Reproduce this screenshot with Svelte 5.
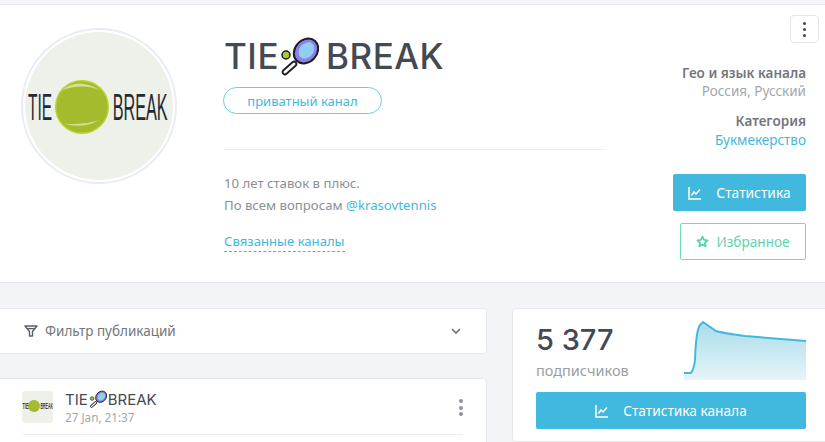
<script>
  const chart = "M684 373 L691 373 Q694 369 695 360 Q696 330 700 325 L703 322 L716 331 Q722 333 745 336 L806 341";
  const area = chart + " L806 380 L684 380 Z";
</script>

{#snippet racket(size)}
  <svg class="racket" width={size} height={size} viewBox="0 0 40 40">
    <circle cx="7" cy="19" r="4" fill="#a8c92f" stroke="#1c1c22" stroke-width="1.5" />
    <path d="M15 28 L6 36" stroke="#1c1c22" stroke-width="6.5" stroke-linecap="round" />
    <path d="M15 28 L6 36" stroke="#f4f4f4" stroke-width="3" stroke-linecap="round" />
    <ellipse cx="27" cy="15" rx="11" ry="13.5" transform="rotate(42 27 15)" fill="#8f7ee8" stroke="#1c1c22" stroke-width="2" />
    <ellipse cx="27.5" cy="14.5" rx="7" ry="9" transform="rotate(42 27.5 14.5)" fill="#8fd0f0" />
  </svg>
{/snippet}

{#snippet logo()}
  <svg viewBox="0 0 152 152" width="100%" height="100%">
    <circle cx="76" cy="76" r="76" fill="#eef1ea" />
    <text transform="translate(3 90) scale(.43 1)" class="logo-text">TIE</text>
    <circle cx="58.5" cy="77" r="27" fill="#a5bb2e" stroke="#bcd22f" stroke-width="1.5" />
    <path d="M38 60 Q54 46 78 60 Q58 52 38 60Z" fill="#d5e08a" />
    <path d="M40 94 Q58 100 76 91 Q58 96 40 94Z" fill="#d5e08a" />
    <text transform="translate(90 90) scale(.45 1)" class="logo-text">BREAK</text>
  </svg>
{/snippet}

{#snippet statsIcon()}
  <svg width="14" height="14" viewBox="0 0 14 14" fill="none" stroke="currentColor" stroke-width="1.5">
    <path d="M1 1 V13 H13" />
    <path d="M3.5 9.5 L6 6 L8 8 L12 3.5" />
  </svg>
{/snippet}

<div class="page">
  <header class="head">
    <div class="avatar">{@render logo()}</div>
    <div class="info">
      <h1>TIE{@render racket(40)}BREAK</h1>
      <span class="badge">приватный канал</span>
      <hr />
      <p class="desc">10 лет ставок в плюс.<br />По всем вопросам <span class="blue">@krasovtennis</span></p>
      <span class="linked">Связанные каналы</span>
    </div>
    <div class="side">
      <button class="menu" aria-label="меню"><i></i><i></i><i></i></button>
      <b class="geo">Гео и язык канала</b>
      <span class="muted">Россия, Русский</span>
      <b class="cat">Категория</b>
      <span class="blue">Букмекерство</span>
      <button class="stat">{@render statsIcon()}<span>Статистика</span></button>
      <button class="fav">
        <svg width="13" height="13" viewBox="0 0 24 24" fill="none" stroke="currentColor" stroke-width="3.4" stroke-linejoin="round"><path d="M12 3 L14.8 9 L21.5 9.8 L16.5 14.3 L17.9 21 L12 17.6 L6.1 21 L7.5 14.3 L2.5 9.8 L9.2 9 Z" /></svg>
        <span>Избранное</span>
      </button>
    </div>
  </header>

  <div class="body">
    <div class="left">
      <section class="card filter">
        <svg width="14" height="14" viewBox="0 0 14 14" fill="none" stroke="#5c6169" stroke-width="1.4" stroke-linejoin="round"><path d="M1 2 H13 L8.5 7.5 V12 H5.5 V7.5 Z" /><path d="M3 4.6 H11" /></svg>
        <span>Фильтр публикаций</span>
        <svg class="chev" width="10" height="7" viewBox="0 0 10 7" fill="none" stroke="#6f747c" stroke-width="1.7"><path d="M1 1 L5 5 L9 1" /></svg>
      </section>
      <section class="card post">
        <div class="post-head">
          <div class="thumb">
            <svg viewBox="0 0 32 32" width="32" height="32">
              <rect width="32" height="32" fill="#eef1ea" />
              <circle cx="12" cy="15" r="6" fill="#a3bb2d" />
              <text transform="translate(0.5 18) scale(.43 1)" class="thumb-text">TIE</text>
              <text transform="translate(18.5 18) scale(.39 1)" class="thumb-text">BREAK</text>
            </svg>
          </div>
          <div class="post-title">
            <div class="name">TIE{@render racket(18)}BREAK</div>
            <div class="date">27 Jan, 21:37</div>
          </div>
          <div class="dots"><i></i><i></i><i></i></div>
        </div>
      </section>
    </div>

    <section class="card right">
      <div class="count">5 377</div>
      <div class="subs">подписчиков</div>
      <svg class="chart" width="825" height="442" viewBox="0 0 825 442">
        <defs>
          <linearGradient id="fade" x1="0" y1="0" x2="0" y2="1">
            <stop offset="0" stop-color="#a9dcea" />
            <stop offset="1" stop-color="#e6f5f9" />
          </linearGradient>
        </defs>
        <path d={area} fill="url(#fade)" />
        <path d={chart} fill="none" stroke="#41b8dd" stroke-width="2" />
      </svg>
      <button class="stat wide">{@render statsIcon()}<span>Статистика канала</span></button>
    </section>
  </div>
</div>

<style>
  :global(body) {
    margin: 0;
    background: #f3f4f8;
    overflow: hidden;
  }
  .page {
    width: 825px;
    height: 442px;
    overflow: hidden;
    font-family: "Noto Sans", "Open Sans", sans-serif;
    color: #8b9096;
    font-size: 13px;
  }
  .head {
    margin-top: 4px;
    height: 279px;
    box-sizing: border-box;
    background: #fff;
    border-top: 1px solid #e6e8ee;
    border-bottom: 1px solid #e6e8ee;
    display: flex;
    padding: 0 19px 0 21px;
  }
  .avatar {
    margin-top: 23px;
    padding: 2px;
    border: 2px solid #e9ecf2;
    border-radius: 50%;
    box-sizing: content-box;
    margin-right: 47px;
    flex: none;
    width: 148px;
    height: 148px;
  }
  .logo-text {
    font-family: "Liberation Sans", sans-serif;
    font-size: 37px;
    fill: #262a33;
  }
  .thumb-text {
    font-family: "Liberation Sans", sans-serif;
    font-size: 9px;
    font-weight: bold;
    fill: #3a3d40;
  }
  .info {
    width: 381px;
    flex: none;
    display: flex;
    flex-direction: column;
    align-items: flex-start;
  }
  h1 {
    margin: 30px 0 0;
    height: 42px;
    display: flex;
    align-items: center;
    font-family: Inter, sans-serif;
    font-weight: 500;
    font-size: 35px;
    letter-spacing: 0.5px;
    color: #434a54;
  }
  h1 .racket {
    margin: 0 7px 0 0;
  }
  .badge {
    margin: 10px 0 0 -1px;
    width: 159px;
    height: 27px;
    box-sizing: border-box;
    border: 1px solid #6ccbe6;
    border-radius: 14px;
    color: #43b8dc;
    display: flex;
    align-items: center;
    justify-content: center;
    font-size: 13px;
  }
  hr {
    width: 100%;
    margin: 35px 0 0;
    border: 0;
    border-top: 1px solid #eef0f3;
  }
  .desc {
    margin: 22px 0 0;
    line-height: 22px;
    font-size: 13.2px;
  }
  .blue {
    color: #43b8dc;
  }
  .linked {
    margin-top: 15px;
    color: #43b8dc;
    font-size: 13.1px;
    line-height: 20px;
    border-bottom: 1px dashed #43b8dc;
  }
  .side {
    flex: 1;
    display: flex;
    flex-direction: column;
    align-items: flex-end;
    position: relative;
    font-size: 13.5px;
    line-height: 18px;
  }
  .menu {
    width: 29px;
    height: 28px;
    margin: 10px -13px 0 0;
    padding: 0;
    background: #fff;
    border: 1px solid #e3e5ea;
    border-radius: 4px;
    display: flex;
    flex-direction: column;
    align-items: center;
    justify-content: center;
    gap: 3px;
  }
  .menu i {
    width: 3px;
    height: 3px;
    border-radius: 50%;
    background: #3f444c;
  }
  .geo {
    margin-top: 21px;
    color: #73777d;
    font-weight: 600;
  }
  .muted {
    color: #a3a7ac;
    margin-top: 0;
  }
  .cat {
    margin-top: 12px;
    color: #73777d;
    font-weight: 600;
  }
  .side .blue {
    margin-top: 1px;
  }
  .stat {
    width: 133px;
    height: 37px;
    margin-top: 25px;
    padding: 0;
    border: 0;
    border-radius: 2px;
    background: #41b8dd;
    color: #fff;
    font: inherit;
    font-size: 13.8px;
    display: flex;
    align-items: center;
    justify-content: center;
    gap: 14px;
  }
  .fav {
    width: 126px;
    height: 37px;
    margin-top: 12px;
    padding: 0;
    background: #fff;
    border: 1px solid #6fdcb9;
    border-radius: 2px;
    color: #5fd3ae;
    font: inherit;
    font-size: 13.6px;
    display: flex;
    align-items: center;
    justify-content: center;
    gap: 7px;
  }
  .body {
    display: flex;
    gap: 25px;
    margin-top: 25px;
    align-items: flex-start;
  }
  .left {
    width: 487px;
    flex: none;
    display: flex;
    flex-direction: column;
    gap: 24px;
  }
  .card {
    background: #fff;
    border: 1px solid #e6e8ee;
    border-radius: 4px;
    box-sizing: border-box;
  }
  .filter {
    height: 46px;
    margin-left: -5px;
    padding: 0 25px 0 28px;
    display: flex;
    align-items: center;
    gap: 7px;
    color: #73777d;
    font-size: 13.5px;
  }
  .chev {
    margin-left: auto;
  }
  .post {
    margin-left: -5px;
    height: 100px;
    padding: 12px 23px 0 26px;
  }
  .post-head {
    display: flex;
    align-items: flex-start;
    height: 43px;
    border-bottom: 1px solid #eef0f3;
  }
  .thumb {
    width: 31px;
    height: 32px;
    overflow: hidden;
    border-radius: 3px;
    margin-right: 12px;
  }
  .post-title {
    margin-top: -2px;
  }
  .name {
    display: flex;
    align-items: center;
    height: 20px;
    font-family: Inter, sans-serif;
    color: #434a54;
    font-size: 15px;
  }
  .name .racket {
    margin: 0 1px;
  }
  .date {
    color: #a3a7ac;
    font-size: 11.7px;
    line-height: 16px;
  }
  .dots {
    margin-left: auto;
    display: flex;
    flex-direction: column;
    gap: 2.5px;
    padding-top: 8px;
  }
  .dots i {
    width: 4px;
    height: 4px;
    border-radius: 50%;
    background: #8f939a;
  }
  .right {
    flex: 1;
    height: 134px;
    margin-right: -8px;
    padding: 0 0 0 23px;
  }
  .count {
    margin-top: 11px;
    font-family: Inter, sans-serif;
    font-weight: 500;
    font-size: 29px;
    line-height: 40px;
    color: #434a54;
  }
  .subs {
    margin-top: 1px;
    font-size: 14.5px;
    line-height: 19px;
    color: #9a9ea3;
  }
  .chart {
    position: absolute;
    left: 0;
    top: 0;
    pointer-events: none;
  }
  .stat.wide {
    width: 270px;
    margin-top: 12px;
    border-radius: 2px;
    font-size: 13.7px;
  }
</style>
